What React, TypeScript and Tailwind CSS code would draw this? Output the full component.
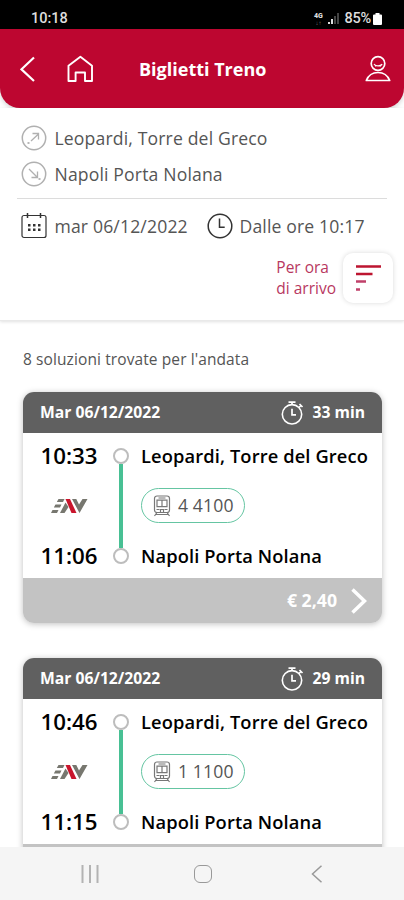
import React, { FC } from "react";

type Solution = {
  date: string;
  duration: string;
  departure: string;
  arrival: string;
  train: string;
  price?: string;
};

const FROM = "Leopardi, Torre del Greco";
const TO = "Napoli Porta Nolana";

const solutions: Solution[] = [
  {
    date: "Mar 06/12/2022",
    duration: "33 min",
    departure: "10:33",
    arrival: "11:06",
    train: "4 4100",
    price: "€ 2,40",
  },
  {
    date: "Mar 06/12/2022",
    duration: "29 min",
    departure: "10:46",
    arrival: "11:15",
    train: "1 1100",
  },
];

const StatusBar: FC = () => (
  <div className="flex h-[29px] shrink-0 items-center bg-black pt-[9px] pr-[22px] pl-[31px] text-[#dedede]">
    <span className="font-[Roboto,sans-serif] text-[14.5px] leading-none font-medium">
      10:18
    </span>
    <div className="ml-auto flex items-center">
      <div className="flex w-[10px] flex-col items-center font-[Roboto,sans-serif]">
        <span className="text-[7px] leading-[7px] font-black">4G</span>
        <span className="text-[6px] leading-[6px] text-[#777]">↓↑</span>
      </div>
      <svg width="12" height="12" viewBox="0 0 12 12" className="ml-[5px]">
        <path d="M0 9h2v2H0zM3 6h2v5H3z" fill="#ddd" />
        <path d="M6 3h2v8H6zM9 0h2v11H9z" fill="#444" />
      </svg>
      <span className="ml-[4px] font-[Roboto,sans-serif] text-[14.5px] leading-none font-medium tracking-[-0.2px]">
        85%
      </span>
      <svg width="9" height="12" viewBox="0 0 9 12" className="ml-[2px]">
        <path d="M2.500 0h4v1.500H8A1 1 0 0 1 9 2.500v8.500a1 1 0 0 1-1 1H1a1 1 0 0 1-1-1V2.500a1 1 0 0 1 1-1h1.500z" fill="#fff" />
      </svg>
    </div>
  </div>
);

const Header: FC = () => (
  <header className="flex h-[79px] shrink-0 items-center rounded-b-[20px] bg-[#bd0630] pr-[13px] pl-[20px] text-white shadow-[0_2px_5px_rgba(0,0,0,0.18)]">
    <svg width="15" height="26" viewBox="0 0 15 26" fill="none" stroke="currentColor" strokeWidth="2.200">
      <path d="M14 1.500 1.500 13.300 14 25" />
    </svg>
    <svg width="28" height="28" viewBox="0 0 28 28" fill="none" stroke="currentColor" strokeWidth="1.900" strokeLinejoin="round" className="ml-[31px]">
      <path d="M2.500 10.700 14.400 1.800 26 10.700V26h-7v-8.500h-9.400V26H2.500z" />
    </svg>
    <h1 className="ml-[45px] text-[18px] leading-6 font-bold whitespace-nowrap">
      Biglietti Treno
    </h1>
    <svg width="26" height="28" viewBox="0 0 26 28" fill="none" stroke="currentColor" strokeWidth="1.700" strokeLinejoin="round" className="ml-auto">
      <circle cx="13" cy="8.500" r="6.800" />
      <path d="M9 9c1.600 2.300 6 2.600 8.200.2M10 10l1 1.500M16 10l-.8 1.500" strokeWidth="1.300" />
      <path d="M1.300 25.500c2-5 5.300-8 11.700-8s9.700 3 11.700 8z" />
    </svg>
  </header>
);

const StationIcon: FC<{ arrival?: boolean }> = ({ arrival }) => (
  <svg width="26" height="26" viewBox="0 0 26 26" fill="none" stroke="#b0b0b0" className="shrink-0">
    <circle cx="13" cy="13" r="11.700" strokeWidth="1.500" />
    {arrival ? (
      <>
        <path d="m8 8 8 8M16.500 10.500V16.500H10.500" strokeWidth="1.300" />
        <path d="M17.500 18h2" strokeWidth="1.800" />
      </>
    ) : (
      <>
        <path d="m10 16 7.500-7M11.500 8.500h6v6" strokeWidth="1.300" />
        <path d="M6.500 18h2" strokeWidth="1.800" />
      </>
    )}
  </svg>
);

const SearchSummary: FC = () => (
  <section className="h-[213px] shrink-0 border-b border-[#e9e9e9] bg-white shadow-[0_1px_3px_rgba(0,0,0,0.12)]">
    <div className="mx-[17px] flex h-[91px] flex-col gap-[10px] border-b border-[#dcdcdc] pt-[17px] pl-[4px] text-[17.600px] leading-[26px] tracking-[0.15px] text-[#555]">
      <div className="flex items-center">
        <StationIcon />
        <span className="ml-[7.5px]">{FROM}</span>
      </div>
      <div className="flex items-center">
        <StationIcon arrival />
        <span className="ml-[7.5px]">{TO}</span>
      </div>
    </div>
    <div className="flex h-[54px] items-center pl-[21px] text-[17.600px] tracking-[0.15px] text-[#555]">
      <svg width="26" height="26" viewBox="0 0 26 26" fill="none" stroke="#333" strokeWidth="1.200">
        <rect x="1" y="2.500" width="24" height="22" rx="2" />
        <path d="M6.500 0v5M19.500 0v5" strokeWidth="1.500" />
        <path d="M7 12.300h12.500M7 16.800h12.500" strokeWidth="2.500" strokeDasharray="2.500 2.500" />
      </svg>
      <span className="ml-[7.5px] w-[143.5px] whitespace-nowrap">mar 06/12/2022</span>
      <svg width="26" height="26" viewBox="0 0 26 26" fill="none" stroke="#333" strokeWidth="1.500" className="ml-[8.5px]">
        <circle cx="13" cy="13" r="11.800" />
        <path d="M12.500 5.500v8.800h5.200" />
      </svg>
      <span className="ml-[7px] whitespace-nowrap">Dalle ore 10:17</span>
    </div>
    <div className="flex items-center justify-end pr-[11px]">
      <span className="mr-[7px] text-[15.500px] leading-[21px] text-[#b8385f]">
        Per ora
        <br />
        di arrivo
      </span>
      <button className="flex size-[50px] items-center justify-center rounded-[10px] bg-white shadow-[0_0_5px_rgba(0,0,0,0.15)]">
        <svg width="26" height="28" viewBox="0 0 26 28" stroke="#bd1530" strokeWidth="2.400">
          <path d="M1 2.500h25M1 10h16.500" />
          <path d="M1 17.500h10M1 25.500h4" stroke="#c0406a" />
        </svg>
      </button>
    </div>
  </section>
);

const Stopwatch: FC = () => (
  <svg width="24" height="24" viewBox="0 0 24 24" fill="none" stroke="#fff" strokeWidth="1.600">
    <circle cx="12" cy="13.300" r="9.700" />
    <path d="M8.500 1.200h7M12 1.200v2.400M19.500 3l3 3M21 4.500l-2 2M12 7.800v6h4" strokeWidth="1.700" />
  </svg>
);

const EavLogo: FC = () => (
  <svg width="37" height="16" viewBox="0 0 37 16">
    <path d="M7.500 1h6L12 4H5.800zM4.500 6.500h6L9 9.500H2.800zM1.500 12h6L6 15H0z" fill="#77776f" />
    <path d="M14.500 4.500 17.500 9 13.500 15H9z" fill="#77776f" />
    <path d="M14.500 1h4.500l6.500 14h-5z" fill="#c9152c" />
    <path d="M21 1h4.300l2.700 5.500L31.500 1h5L28.500 15z" fill="#77776f" />
  </svg>
);

const TrainIcon: FC = () => (
  <svg width="18" height="22" viewBox="0 0 18 22" fill="none" stroke="#777" strokeWidth="1.200">
    <rect x="1.500" y="1" width="15" height="16.500" rx="2.500" />
    <path d="M4 5.200h10v6.500H4zM9 5.200v6.500M5.500 3h7M3.500 14.500h3M11.500 14.500h3M7.500 17v-2.500h3V17M4 17.500 1.500 21M14 17.500l2.500 3.500M3 19.500h12" />
  </svg>
);

const Stop: FC = () => (
  <span className="size-4 shrink-0 rounded-full border-2 border-[#bdbdbd] bg-white" />
);

const SolutionCard: FC<{ solution: Solution }> = ({ solution }) => (
  <article className="h-[231px] w-[359px] shrink-0 overflow-hidden rounded-[11px] bg-white shadow-[0_1px_6px_rgba(0,0,0,0.25)]">
    <div className="flex h-[41px] items-center bg-[#606060] pr-[17px] pl-[17px] text-[15.700px] font-bold text-white">
      <span>{solution.date}</span>
      <span className="mr-[8px] ml-auto">
        <Stopwatch />
      </span>
      <span>{solution.duration}</span>
    </div>
    <div className="flex h-[145px] pt-[11px] pl-[17px] text-black">
      <div className="flex h-[124px] w-[58px] shrink-0 flex-col items-center justify-between text-[22.300px] leading-[24px] font-semibold">
        <span>{solution.departure}</span>
        <EavLogo />
        <span>{solution.arrival}</span>
      </div>
      <div className="ml-[15px] flex h-[120px] w-4 shrink-0 flex-col items-center pt-[4px]">
        <Stop />
        <span className="w-[4px] grow bg-[#48c094]" />
        <Stop />
      </div>
      <div className="ml-[12px] flex h-[123px] flex-col items-start justify-between text-[18.300px] leading-[23px] font-semibold tracking-[0.12px] whitespace-nowrap">
        <span>{FROM}</span>
        <span className="flex h-[35px] w-[104px] items-center rounded-full border-[1.500px] border-[#65c5a2] pl-[11px] text-[17.600px] font-normal text-[#555]">
          <TrainIcon />
          <span className="ml-[7px]">{solution.train}</span>
        </span>
        <span>{TO}</span>
      </div>
    </div>
    <div className="flex h-[45px] items-center justify-end bg-[#c3c3c3] pr-[15px] text-[17.700px] font-bold text-white">
      {solution.price && <span>{solution.price}</span>}
      <svg width="16" height="26" viewBox="0 0 16 26" fill="none" stroke="currentColor" strokeWidth="3.500" className="ml-[14px]">
        <path d="m1.500 1.500 12 11.500L1.500 24.500" />
      </svg>
    </div>
  </article>
);

const NavigationBar: FC = () => (
  <nav className="flex h-[53px] shrink-0 items-center bg-[#f5f5f5] pl-[81px] text-[#999]">
    <svg width="18" height="18" viewBox="0 0 18 18" stroke="#b3b3b3" strokeWidth="2">
      <path d="M1.500 0v18M9 0v18M16.500 0v18" />
    </svg>
    <span className="ml-[95px] size-[18px] rounded-[6px] border-[1.500px] border-[#999]" />
    <svg width="12" height="18" viewBox="0 0 12 18" fill="none" stroke="currentColor" strokeWidth="1.500" className="ml-[99px]">
      <path d="M10.500.7 1.500 9l9 8.300" />
    </svg>
  </nav>
);

export default function App() {
  return (
    <div className="flex h-[900px] w-[404px] flex-col overflow-hidden bg-white font-['Open_Sans',sans-serif]">
      <StatusBar />
      <Header />
      <SearchSummary />
      <main className="min-h-0 grow overflow-hidden pl-[23px]">
        <p className="mt-[26px] h-[45px] text-[15.500px] leading-[24px] tracking-[0.1px] text-[#555]">
          8 soluzioni trovate per l'andata
        </p>
        <div className="flex flex-col gap-[35px]">
          {solutions.map((solution) => (
            <SolutionCard key={solution.departure} solution={solution} />
          ))}
        </div>
      </main>
      <NavigationBar />
    </div>
  );
}
